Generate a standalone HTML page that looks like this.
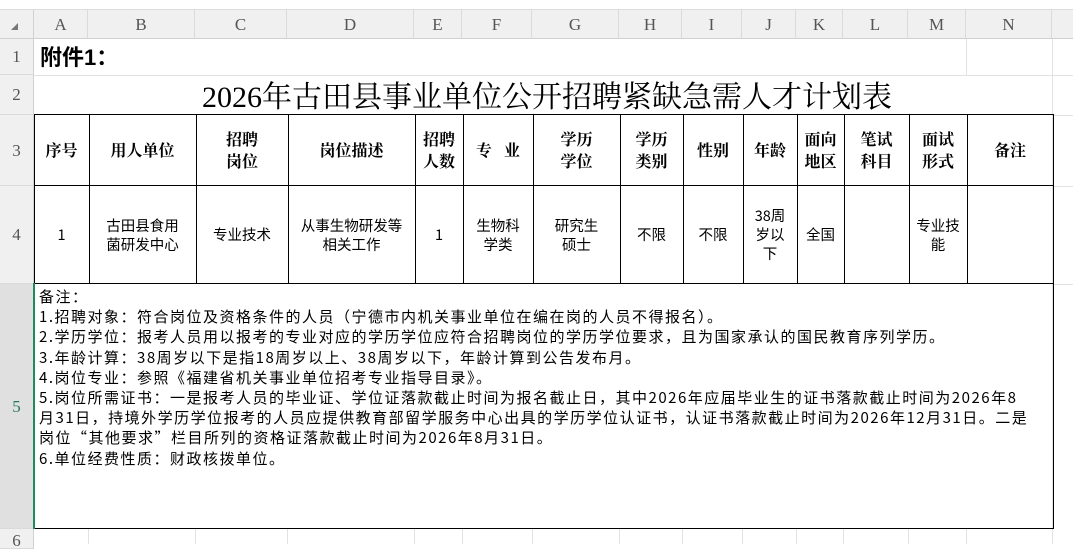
<!DOCTYPE html>
<html><head><meta charset="utf-8"><style>
*{margin:0;padding:0;box-sizing:border-box}
body{width:1073px;height:544px;background:#fff;position:relative;overflow:hidden;font-family:"Liberation Sans","Noto Sans CJK SC",sans-serif}
.ab{position:absolute}
.colh{position:absolute;top:10px;height:29px;background:#f0f0f0;border-right:1px solid #dadada;border-bottom:1px solid #d0d0d0;font-family:"Liberation Serif",serif;color:#555;font-size:17px;text-align:center;line-height:29px}
.rowh{position:absolute;left:0;width:34px;background:#f0f0f0;border-bottom:1px solid #dadada;border-right:1px solid #d0d0d0;font-family:"Liberation Serif",serif;color:#555;font-size:17px;text-align:center}
.vl{position:absolute;width:1px;background:#e2e2e2}
.hl{position:absolute;height:1px;background:#e2e2e2}
table{position:absolute;left:33px;top:114px;width:1019px;border-collapse:collapse;table-layout:fixed}
td{border:1px solid #000;text-align:center;vertical-align:middle;padding:0}
.h td{font-family:"Noto Serif CJK SC",serif;font-weight:bold;font-size:16px;line-height:22px;height:71px}
.d td{font-family:"Noto Sans CJK SC",sans-serif;font-size:14.5px;line-height:19px;height:98px}
.notes{position:absolute;left:39px;top:287px;font-family:"Noto Sans CJK SC",sans-serif;font-size:15px;line-height:20.2px;letter-spacing:1.5px;white-space:nowrap;color:#000}
</style></head><body>
<div class="ab" style="left:0;top:0;width:1073px;height:10px;background:#fff;border-bottom:1px solid #ddd"></div>
<div class="ab" style="left:0;top:10px;width:34px;height:29px;background:#f0f0f0;border-right:1px solid #d0d0d0;border-bottom:1px solid #d0d0d0"></div>
<div class="ab" style="left:11px;top:23px;width:0;height:0;border-left:7px solid transparent;border-bottom:7px solid #777"></div>
<div class="colh" style="left:34px;width:54px">A</div>
<div class="colh" style="left:88px;width:107px">B</div>
<div class="colh" style="left:195px;width:92px">C</div>
<div class="colh" style="left:287px;width:127px">D</div>
<div class="colh" style="left:414px;width:48px">E</div>
<div class="colh" style="left:462px;width:70px">F</div>
<div class="colh" style="left:532px;width:87px">G</div>
<div class="colh" style="left:619px;width:63px">H</div>
<div class="colh" style="left:682px;width:60px">I</div>
<div class="colh" style="left:742px;width:54px">J</div>
<div class="colh" style="left:796px;width:47px">K</div>
<div class="colh" style="left:843px;width:65px">L</div>
<div class="colh" style="left:908px;width:58px">M</div>
<div class="colh" style="left:966px;width:86px">N</div>
<div class="colh" style="left:1052px;width:21px;border-right:none"></div>

<div class="rowh" style="top:39px;height:36px;line-height:36px">1</div>
<div class="rowh" style="top:75px;height:40px;line-height:40px">2</div>
<div class="rowh" style="top:115px;height:71px;line-height:71px">3</div>
<div class="rowh" style="top:186px;height:98px;line-height:98px">4</div>
<div class="rowh" style="top:284px;height:245px;line-height:245px;background:#e0e0e0;color:#1e7a5a">5</div>
<div class="rowh" style="top:529px;height:20px;line-height:24px">6</div>

<div class="hl" style="left:34px;top:75px;width:1039px"></div>
<div class="hl" style="left:1052px;top:115px;width:21px"></div>
<div class="hl" style="left:1052px;top:186px;width:21px"></div>
<div class="hl" style="left:1052px;top:284px;width:21px"></div>
<div class="vl" style="left:966px;top:39px;height:36px"></div>
<div class="vl" style="left:1052px;top:39px;height:505px"></div>
<div class="vl" style="left:88px;top:529px;height:15px"></div>
<div class="vl" style="left:195px;top:529px;height:15px"></div>
<div class="vl" style="left:287px;top:529px;height:15px"></div>
<div class="vl" style="left:414px;top:529px;height:15px"></div>
<div class="vl" style="left:462px;top:529px;height:15px"></div>
<div class="vl" style="left:532px;top:529px;height:15px"></div>
<div class="vl" style="left:619px;top:529px;height:15px"></div>
<div class="vl" style="left:682px;top:529px;height:15px"></div>
<div class="vl" style="left:742px;top:529px;height:15px"></div>
<div class="vl" style="left:796px;top:529px;height:15px"></div>
<div class="vl" style="left:843px;top:529px;height:15px"></div>
<div class="vl" style="left:908px;top:529px;height:15px"></div>
<div class="vl" style="left:966px;top:529px;height:15px"></div>

<div class="ab" style="left:40px;top:45px;font-size:22px;line-height:26px;font-family:'Liberation Sans','Noto Sans CJK SC',sans-serif;font-weight:bold">附件1：</div>
<div class="ab" style="left:34px;top:79px;width:1018px;text-align:center;font-family:'Liberation Serif','Noto Serif CJK SC',serif;font-size:30px;line-height:38px;padding-left:8px">2026年古田县事业单位公开招聘紧缺急需人才计划表</div>

<table>
<colgroup><col style="width:55px"><col style="width:107px"><col style="width:92px"><col style="width:127px"><col style="width:48px"><col style="width:70px"><col style="width:87px"><col style="width:63px"><col style="width:60px"><col style="width:54px"><col style="width:47px"><col style="width:65px"><col style="width:58px"><col style="width:86px"></colgroup>
<tr class="h"><td>序号</td><td>用人单位</td><td>招聘<br>岗位</td><td>岗位描述</td><td>招聘<br>人数</td><td>专&nbsp;&nbsp;&nbsp;业</td><td>学历<br>学位</td><td>学历<br>类别</td><td>性别</td><td>年龄</td><td>面向<br>地区</td><td>笔试<br>科目</td><td>面试<br>形式</td><td>备注</td></tr>
<tr class="d"><td>1</td><td>古田县食用<br>菌研发中心</td><td>专业技术</td><td>从事生物研发等<br>相关工作</td><td>1</td><td>生物科<br>学类</td><td>研究生<br>硕士</td><td>不限</td><td>不限</td><td>38周<br>岁以<br>下</td><td>全国</td><td></td><td>专业技<br>能</td><td></td></tr>
<tr><td colspan="14" style="height:245px;border-left:2px solid #1e8a5e"></td></tr>
</table>

<div class="notes">备注：<br>1.招聘对象：符合岗位及资格条件的人员（宁德市内机关事业单位在编在岗的人员不得报名）。<br>2.学历学位：报考人员用以报考的专业对应的学历学位应符合招聘岗位的学历学位要求，且为国家承认的国民教育序列学历。<br>3.年龄计算：38周岁以下是指18周岁以上、38周岁以下，年龄计算到公告发布月。<br>4.岗位专业：参照《福建省机关事业单位招考专业指导目录》。<br>5.岗位所需证书：一是报考人员的毕业证、学位证落款截止时间为报名截止日，其中2026年应届毕业生的证书落款截止时间为2026年8<br>月31日，持境外学历学位报考的人员应提供教育部留学服务中心出具的学历学位认证书，认证书落款截止时间为2026年12月31日。二是<br>岗位“其他要求”栏目所列的资格证落款截止时间为2026年8月31日。<br>6.单位经费性质：财政核拨单位。</div>
</body></html>
